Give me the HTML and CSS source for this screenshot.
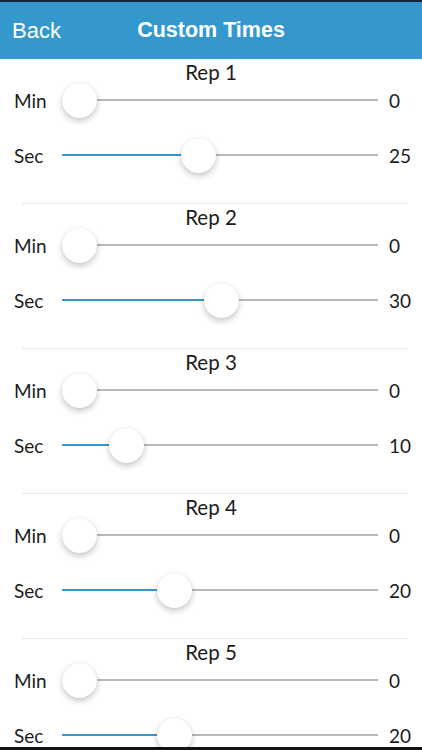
FILE: index.html
```html
<!DOCTYPE html>
<html lang="en">
<head>
    <meta charset="UTF-8">
    <meta name="viewport" content="width=device-width, initial-scale=1.0">
    <title>Custom Times</title>
    <link rel="stylesheet" href="styles.css">
</head>
<body>
    <div class="navbar">
        <span class="nav-back">Back</span>
        <span class="nav-title">Custom Times</span>
        <span></span>
    </div>
    <div class="list" id="list"></div>
    <div class="bottom-edge"></div>
    <script>
        // --- Data ---
        const reps = [
            { min: 0, sec: 25 },
            { min: 0, sec: 30 },
            { min: 0, sec: 10 },
            { min: 0, sec: 20 },
            { min: 0, sec: 20 }
        ];
        const MAX = 59;

        function slider(label, value) {
            const p = (value / MAX).toFixed(4);
            return `
            <div class="row">
                <div class="row-label">${label}</div>
                <div class="slider" style="--p:${p}">
                    <div class="track"></div>
                    <div class="fill"></div>
                    <div class="thumb"></div>
                </div>
                <div class="row-value">${value}</div>
            </div>`;
        }

        const list = document.getElementById('list');
        list.innerHTML = reps.map((r, i) => `
            <div class="rep">
                <div class="rep-title">Rep ${i + 1}</div>
                ${slider('Min', r.min)}
                ${slider('Sec', r.sec)}
            </div>`).join('');
    </script>
</body>
</html>
```

FILE: styles.css
```css
body {
    margin: 0;
    padding: 0;
    background: #fff;
    color: #1c1c1c;
    font-family: Lato, 'Noto Sans', sans-serif;
    overflow: hidden;
}
.navbar {
    height: 57px;
    border-top: 2px solid #13283a;
    background: #3598cd;
    color: #fff;
    display: grid;
    grid-template-columns: 1fr auto 1fr;
    align-items: center;
    font-family: 'Liberation Sans', Arial, sans-serif;
}
.nav-back {
    font-size: 22px;
    margin-left: 12px;
}
.nav-title {
    font-size: 21.5px;
    font-weight: bold;
}
.rep {
    height: 144px;
    border-bottom: 1px solid #e6e6e6;
    margin: 0 14px 0 22px;
}
.rep-title {
    height: 26px;
    line-height: 26px;
    text-align: center;
    font-size: 20.5px;
    margin-left: -22px;
    margin-right: -14px;
}
.row {
    height: 30px;
    display: flex;
    align-items: center;
    margin-left: -8px;
    margin-right: -14px;
}
.row + .row {
    margin-top: 25px;
}
.row-label {
    width: 48px;
    font-size: 19px;
}
.row-value {
    width: 33px;
    padding-left: 11px;
    font-size: 19px;
}
.slider {
    position: relative;
    flex: 1;
    height: 36px;
}
.track {
    position: absolute;
    left: 0;
    right: 0;
    top: 17px;
    height: 2px;
    background: #b8b8b8;
}
.fill {
    position: absolute;
    left: 0;
    top: 17px;
    height: 2px;
    width: calc(var(--p) * (100% - 36px) + 18px);
    background: #3598cd;
}
.thumb {
    position: absolute;
    top: 1px;
    left: calc(var(--p) * (100% - 36px));
    width: 35px;
    height: 35px;
    border-radius: 50%;
    background: #fff;
    box-shadow: 0 3px 6px rgba(0,0,0,0.22), 0 0 1px rgba(0,0,0,0.12);
}
.bottom-edge {
    position: fixed;
    left: 0;
    right: 0;
    bottom: 0;
    height: 3px;
    background: #111;
}
```
